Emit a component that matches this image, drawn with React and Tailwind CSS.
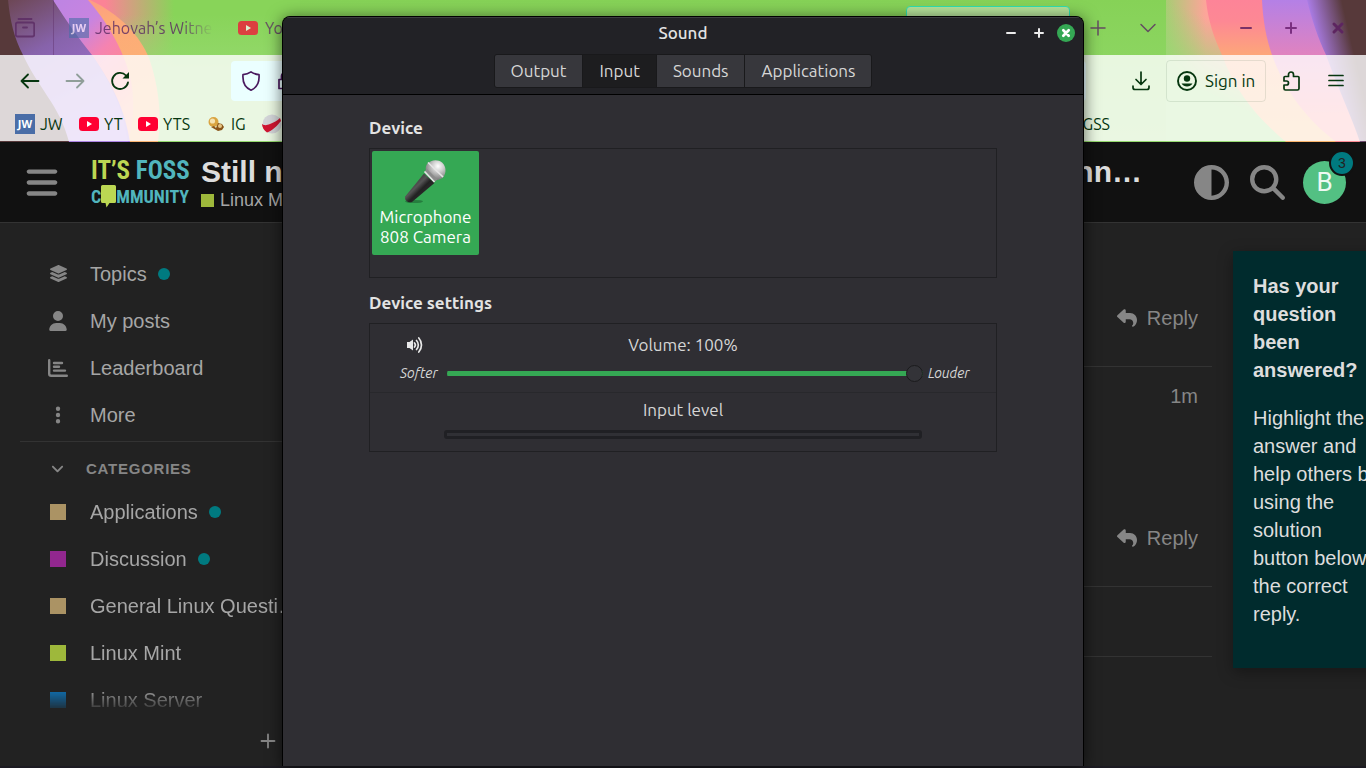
import React, { useState } from 'react';
import {
  FaAngleDown,
  FaBars,
  FaCircleHalfStroke,
  FaEllipsisVertical,
  FaLayerGroup,
  FaMagnifyingGlass,
  FaReply,
  FaUser,
} from 'react-icons/fa6';

const uiFont = "font-['Ubuntu','Noto_Sans',sans-serif]";

const WallpaperLeft = () => (
  <svg width="300" height="142" viewBox="0 0 300 142" aria-hidden="true">
    <defs>
      <linearGradient id="wlGlow" x1="0" x2="1">
        <stop offset="0.35" stopColor="#fb8396" />
        <stop offset="0.58" stopColor="#88d459" />
      </linearGradient>
      <linearGradient id="wlPink" x1="0.2" x2="0.9" y2="0.8">
        <stop offset="0" stopColor="#b884e4" />
        <stop offset="0.4" stopColor="#c884e0" />
        <stop offset="0.6" stopColor="#f583b0" />
        <stop offset="0.8" stopColor="#fd8894" />
        <stop offset="1" stopColor="#fda58c" />
      </linearGradient>
      <linearGradient id="wlPurple" x1="0" x2="0.5" y2="1">
        <stop offset="0" stopColor="#6b454f" />
        <stop offset="0.4" stopColor="#8763ab" />
        <stop offset="1" stopColor="#a97ae0" />
      </linearGradient>
      <linearGradient id="wlOrange" x1="0" x2="0.4" y2="1">
        <stop offset="0" stopColor="#fd8796" />
        <stop offset="0.35" stopColor="#fdaa78" />
        <stop offset="1" stopColor="#fbb573" />
      </linearGradient>
      <linearGradient id="wlFade" x2="0" y2="1">
        <stop offset="0.1" stopColor="#95d96d" stopOpacity="0" />
        <stop offset="0.5" stopColor="#95d96d" />
      </linearGradient>
    </defs>
    <rect width="300" height="142" fill="url(#wlGlow)" />
    <rect x="120" width="180" height="142" fill="url(#wlFade)" />
    <path d="M0 0H90C120 14 140 36 149 58C158 84 162 112 158 142H0Z" fill="url(#wlOrange)" />
    <path d="M0 0H88C104 18 122 46 130 76C135 98 134 122 128 142H0Z" fill="url(#wlPink)" />
    <path d="M0 0H53C66 20 78 38 92 55C108 78 124 104 130 142H0Z" fill="url(#wlPurple)" />
    <path d="M23 55C38 88 60 106 69 142H128C122 104 108 78 92 55Z" fill="#b08ae6" opacity="0.6" />
    <path d="M0 0H8C10 20 14 38 23 55C38 88 60 106 69 142H0Z" fill="#57393a" />
  </svg>
);

const WallpaperRight = () => (
  <svg width="200" height="142" viewBox="20 0 200 142" aria-hidden="true">
    <defs>
      <linearGradient id="wrGlow" x1="0" x2="1">
        <stop offset="0" stopColor="#a9cc74" />
        <stop offset="0.2" stopColor="#fda59a" />
      </linearGradient>
      <linearGradient id="wrGreen" x1="0.6" x2="0.2" y2="1">
        <stop offset="0.2" stopColor="#97da72" stopOpacity="0" />
        <stop offset="0.65" stopColor="#97da72" />
      </linearGradient>
      <linearGradient id="wrOrange" x2="0" y2="1">
        <stop offset="0" stopColor="#fd8498" />
        <stop offset="0.15" stopColor="#fd8894" />
        <stop offset="0.4" stopColor="#fda878" />
        <stop offset="1" stopColor="#fbb56c" />
      </linearGradient>
      <linearGradient id="wrPink" x2="0" y2="1">
        <stop offset="0" stopColor="#b480e6" />
        <stop offset="0.38" stopColor="#df83c0" />
        <stop offset="0.8" stopColor="#fd8a92" />
      </linearGradient>
      <linearGradient id="wrPurple" x1="0.1" y1="0.5" x2="1" y2="0">
        <stop offset="0.15" stopColor="#aa7ce6" />
        <stop offset="0.65" stopColor="#57393a" />
      </linearGradient>
    </defs>
    <rect x="20" width="200" height="142" fill="url(#wrGlow)" />
    <rect x="20" width="120" height="142" fill="url(#wrGreen)" />
    <path d="M60 0C62 20 68 38 76 55C90 94 114 120 140 142H220V0Z" fill="url(#wrOrange)" />
    <path d="M116 0C117 20 120 38 126 55C140 94 162 120 190 142H220V0Z" fill="url(#wrPink)" />
    <path d="M161 0C166 20 172 38 180 55C192 88 206 118 214 142H220V0Z" fill="url(#wrPurple)" />
  </svg>
);

const JwIcon = ({ className = '' }) => (
  <svg width="20" height="20" viewBox="0 0 20 20" className={`shrink-0 ${className}`} aria-hidden="true">
    <rect width="20" height="20" fill="#4a6da7" />
    <text x="10" y="14" textAnchor="middle" fontSize="11" fontWeight="700" fill="#fff" fontFamily="Noto Sans, sans-serif">
      JW
    </text>
  </svg>
);

const YoutubeIcon = ({ className = '' }) => (
  <svg width="20" height="14" viewBox="0 0 20 14" className={`shrink-0 ${className}`} aria-hidden="true">
    <rect width="20" height="14" rx="3.5" fill="#ff0033" />
    <path d="M8 4l5 3-5 3z" fill="#fff" />
  </svg>
);

const BooksIcon = () => (
  <svg width="16" height="14" viewBox="0 0 16 14" className="shrink-0" aria-hidden="true">
    <circle cx="5.5" cy="5" r="5" fill="#d9a441" />
    <circle cx="4.5" cy="4" r="2.6" fill="#f5e2b0" />
    <path d="M3 10l3-1 2 2 2-5 4 1 2 3-2 3-4 1z" fill="#8a5418" />
    <circle cx="12" cy="9" r="2" fill="#e6c685" />
  </svg>
);

const BallIcon = () => (
  <svg width="20" height="20" viewBox="0 0 20 20" className="shrink-0" aria-hidden="true">
    <circle cx="10" cy="10" r="9.5" fill="#d3d5d8" />
    <path d="M0 10C3 12 5 11 8 10C12 8.500 15 7 18 4L19 7C15 12 10 17 5 18.500C2 16.500 0 13 0 10Z" fill="#d01531" />
  </svg>
);

// thin stroked glyphs of the browser chrome
const Stroke = ({ size = 20, width = 1.8, d, className = '' }) => (
  <svg
    width={size}
    height={size}
    viewBox="0 0 20 20"
    fill="none"
    stroke="currentColor"
    strokeWidth={width}
    strokeLinecap="round"
    strokeLinejoin="round"
    className={`shrink-0 ${className}`}
    aria-hidden="true"
  >
    <path d={d} />
  </svg>
);

const IconButton = ({ label, className = '', children }) => (
  <button type="button" aria-label={label} className={`flex shrink-0 items-center justify-center ${className}`}>
    {children}
  </button>
);

const TabStrip = () => (
  <div className="flex h-[55px] items-center text-base text-[#5a2a63]/80">
    <IconButton label="Recent browsing" className="h-full w-[53px] pr-1">
      <Stroke d="M3.500 1h13M2.500 4.500h15a1.700 1.700 0 0 1 1.700 1.700v10.600a1.700 1.700 0 0 1-1.700 1.700h-15a1.700 1.700 0 0 1-1.700-1.700v-10.600a1.700 1.700 0 0 1 1.700-1.700zM8 9.500h4" />
    </IconButton>
    <div className="flex h-full items-center border-l border-[#5a2a63]/40 pl-[15px]">
      <JwIcon className="opacity-60" />
      <span className="ml-[6px] w-[118px] whitespace-nowrap [mask-image:linear-gradient(to_right,black_75%,transparent_100%)]">
        Jehovah’s Witne
      </span>
      <YoutubeIcon className="ml-[25px] opacity-70" />
      <span className="ml-[7px]">YouTube</span>
    </div>
    <div className="ml-auto mt-[6px] h-[49px] w-[164px] self-start rounded-t border border-[#2fe0b0] bg-white/40" />
    <div className="flex items-center">
      <IconButton label="New tab" className="ml-[18px] w-5">
        <Stroke width={1.500} d="M10 3v14M3 10h14" />
      </IconButton>
      <IconButton label="List all tabs" className="ml-[30px] w-5">
        <Stroke width={1.500} d="M3 6.500l7 7 7-7" />
      </IconButton>
      <IconButton label="Minimize browser" className="ml-[78px] w-5 text-[#7a3068]">
        <Stroke width={2} d="M5 10h10" />
      </IconButton>
      <IconButton label="Maximize browser" className="ml-[25px] w-5 text-[#7a2f80]">
        <Stroke width={2} d="M10 5v10M5 10h10" />
      </IconButton>
      <IconButton label="Close browser" className="mr-[18px] ml-[27px] w-5 text-[#5d2560]">
        <Stroke width={3} d="M6 6l8 8M14 6l-8 8" />
      </IconButton>
    </div>
  </div>
);

const Toolbar = () => (
  <div className="flex h-[52px] items-center px-5 text-[#06360f]">
    <IconButton label="Back" className="w-5">
      <Stroke d="M18.500 10H1.500M8 3.500L1.500 10L8 16.500" />
    </IconButton>
    <IconButton label="Forward" className="ml-[25px] w-5 opacity-40">
      <Stroke d="M1.500 10H18.500M12 3.500L18.500 10L12 16.500" />
    </IconButton>
    <IconButton label="Reload" className="ml-[25px] w-5">
      <svg width="20" height="20" viewBox="0 0 20 20" fill="none" stroke="currentColor" strokeWidth="1.8" aria-hidden="true">
        <path d="M18 11.500A8 8 0 1 1 16 4.500" strokeLinecap="round" />
        <path d="M19 1v6.500h-6.500z" fill="currentColor" stroke="none" />
      </svg>
    </IconButton>
    <div className="ml-[101px] flex h-10 flex-1 items-center rounded bg-[#ebffff] px-[10px] text-[#4a1a5e]">
      <Stroke width={1.700} d="M10 .9c2.500 1.700 5.200 2.500 8 2.700.6 7.400-2 13-8 15.600C4 16.600 1.400 11 2 3.600c2.800-.2 5.500-1 8-2.700z" />
      <Stroke className="ml-[14px]" width={1.700} d="M4 8.500h12v9H4zM6.500 8.500V5a3.500 3.500 0 0 1 7 0v3.500" />
    </div>
    <IconButton label="Downloads" className="ml-[45px] w-5">
      <Stroke width={1.700} d="M10 1v12M5 8.500l5 5 5-5M2 15v1.500a2 2 0 0 0 2 2h12a2 2 0 0 0 2-2V15" />
    </IconButton>
    <button type="button" className="ml-[15px] flex h-[42px] w-[100px] items-center gap-2 rounded border border-[#06360f]/10 pl-[10px] text-[17px] whitespace-nowrap">
      <svg width="20" height="20" viewBox="0 0 20 20" className="shrink-0" aria-hidden="true">
        <circle cx="10" cy="10" r="9" fill="none" stroke="currentColor" strokeWidth="1.9" />
        <circle cx="10" cy="7.500" r="3.200" fill="currentColor" />
        <path d="M4.500 12.500h11a6.500 6.500 0 0 1-11 0z" fill="currentColor" />
      </svg>
      Sign in
    </button>
    <IconButton label="Extensions" className="ml-[15px] w-5">
      <Stroke
        width={1.700}
        d="M4 5.500h3.500V3.500a2.500 2.500 0 0 1 5 0v2h4.500a1 1 0 0 1 1 1v11a1.500 1.500 0 0 1-1.500 1.500H4.500A1.500 1.500 0 0 1 3 17.500V14h2.500a2 2 0 0 0 0-4H3V6.500a1 1 0 0 1 1-1z"
      />
    </IconButton>
    <IconButton label="Open menu" className="ml-[25px] w-5">
      <Stroke width={1.700} d="M3 4.500h14M3 9.500h14M3 14.500h14" />
    </IconButton>
  </div>
);

const Bookmarks = () => (
  <nav aria-label="Bookmarks" className="flex h-[34px] items-center pl-[15px] text-base text-[#06360f]">
    <a href="#jw" className="flex w-[64px] shrink-0 items-center gap-[5px]">
      <JwIcon />
      JW
    </a>
    <a href="#yt" className="flex w-[59px] shrink-0 items-center gap-[5px]">
      <YoutubeIcon />
      YT
    </a>
    <a href="#yts" className="flex w-[70px] shrink-0 items-center gap-[5px]">
      <YoutubeIcon />
      YTS
    </a>
    <a href="#ig" className="flex w-[54px] shrink-0 items-center gap-[7px]">
      <BooksIcon />
      IG
    </a>
    <a href="#ball" aria-label="Bookmark">
      <BallIcon />
    </a>
    <a href="#gss" className="mr-[256px] ml-auto">
      GSS
    </a>
  </nav>
);

const Browser = () => (
  <header className={`relative h-[142px] shrink-0 bg-gradient-to-b from-[#86d257] to-[#95d96d] ${uiFont}`}>
    <div className="absolute inset-0 flex justify-between overflow-hidden">
      <WallpaperLeft />
      <WallpaperRight />
    </div>
    <div className="relative">
      <TabStrip />
      <div className="bg-white/80">
        <Toolbar />
        <Bookmarks />
      </div>
    </div>
  </header>
);

const Logo = () => (
  <a
    href="#home"
    aria-label="It's FOSS Community"
    className="flex h-[54px] w-[99px] shrink-0 flex-col justify-center font-['Ubuntu_Condensed','Roboto_Condensed','Liberation_Sans_Narrow',sans-serif] font-bold whitespace-nowrap text-[#51b5bd]"
  >
    <span className="text-[25px] leading-7">
      <span className="text-[#bcd753]">IT’S</span> FOSS
    </span>
    <span className="flex items-center text-lg leading-[23px]">
      C
      <svg width="15" height="23" viewBox="0 0 15 23" aria-hidden="true">
        <path d="M1.500 0h12A1.500 1.500 0 0 1 15 1.500v15a1.500 1.500 0 0 1-1.500 1.500H8.500L5.500 22.500L4.500 18h-3A1.500 1.500 0 0 1 0 16.500v-15A1.500 1.500 0 0 1 1.500 0z" fill="#bcd753" />
      </svg>
      MMUNITY
    </span>
  </a>
);

const SiteHeader = () => (
  <div className="flex h-[81px] shrink-0 items-center border-b border-[#333] bg-[#111] pr-5 pl-[26px] text-[#868686]">
    <IconButton label="Sidebar" className="w-8">
      <FaBars size={35} />
    </IconButton>
    <div className="ml-[33px]">
      <Logo />
    </div>
    <div className="ml-[11px] min-w-0 flex-1 pt-1">
      <h1 className="flex justify-between text-[30px] leading-8 font-bold text-[#ddd]">
        <span>Still n</span>
        <span>nn…</span>
      </h1>
      <a href="#mint" className="flex items-center gap-[6px] text-lg leading-6 text-[#a6a6a6]">
        <span className="size-[13px] bg-[#9eb83b]" />
        Linux Mint
      </a>
    </div>
    <IconButton label="Toggle color scheme" className="ml-[52px]">
      <FaCircleHalfStroke size={35} />
    </IconButton>
    <IconButton label="Search" className="ml-[21px]">
      <FaMagnifyingGlass size={35} />
    </IconButton>
    <button type="button" aria-label="Notifications" className="relative ml-[18px] size-[43px] rounded-full bg-[#53c083] font-['Roboto',sans-serif] text-[26px] leading-[43px] text-white/90">
      B
      <span className="absolute -top-[11px] -right-[9px] size-[26px] rounded-full border-2 border-[#111] bg-[#007a80] font-['Liberation_Sans',sans-serif] text-sm leading-[22px] text-[#222]">
        3
      </span>
    </button>
  </div>
);

const LeaderboardIcon = () => (
  <svg width="20" height="18" viewBox="0 0 20 18" fill="none" stroke="currentColor" strokeWidth="2.400" strokeLinecap="round" aria-hidden="true">
    <path d="M1.200 1.200v13.600a2 2 0 0 0 2 2h15.600M6 4h8M6 7.800h5M6 11.600h11" />
  </svg>
);

const sections = [
  { label: 'Topics', icon: <FaLayerGroup size={19} />, unread: true },
  { label: 'My posts', icon: <FaUser size={20} /> },
  { label: 'Leaderboard', icon: <LeaderboardIcon /> },
  { label: 'More', icon: <FaEllipsisVertical size={20} /> },
];

const categories = [
  { label: 'Applications', color: 'bg-[#ab9364]', unread: true },
  { label: 'Discussion', color: 'bg-[#92278f]', unread: true },
  { label: 'General Linux Questi…', color: 'bg-[#ab9364]' },
  { label: 'Linux Mint', color: 'bg-[#9eb83b]' },
  { label: 'Linux Server', color: 'bg-[#0e76bd]' },
];

const SidebarRow = ({ label, unread, children }) => (
  <li>
    <a href="#section" className="flex h-[47px] items-center whitespace-nowrap">
      <span className="flex w-[36px] justify-center text-[#868686]">{children}</span>
      <span className="ml-[14px]">{label}</span>
      {unread && <span className="ml-[11px] size-3 rounded-full bg-[#007a80]" />}
    </a>
  </li>
);

const Sidebar = () => (
  <nav aria-label="Sidebar" className="w-[320px] shrink-0 pt-[27px] pl-5 text-[#a6a6a6]">
    <ul className="border-b border-[#333] pb-[3px] pl-5">
      {sections.map((s) => (
        <SidebarRow key={s.label} label={s.label} unread={s.unread}>
          {s.icon}
        </SidebarRow>
      ))}
    </ul>
    <button type="button" className="flex h-[46px] w-full items-center pt-[6px] pl-[30px] text-[15px] font-bold tracking-wider text-[#868686]">
      <FaAngleDown size={15} />
      <span className="ml-[21px]">CATEGORIES</span>
    </button>
    <ul className="pl-5 [mask-image:linear-gradient(to_bottom,black_85%,transparent_96%)]">
      {categories.map((c) => (
        <SidebarRow key={c.label} label={c.label} unread={c.unread}>
          <span className={`size-4 ${c.color}`} />
        </SidebarRow>
      ))}
    </ul>
    <div className="flex justify-end pt-2 pr-[42px] text-[#868686]">
      <IconButton label="Add section">
        <Stroke width={1.800} d="M10 3.500v13M3.500 10h13" />
      </IconButton>
    </div>
  </nav>
);

const ReplyButton = () => (
  <button type="button" className="flex h-7 items-center gap-[10px] text-[#868686]">
    <FaReply size={20} />
    Reply
  </button>
);

const Topic = () => (
  <main className="flex flex-1 flex-col text-[#868686]">
    <div className="flex h-[144px] justify-end border-b border-[#333] pt-[81px] pr-[14px]">
      <ReplyButton />
    </div>
    <div className="flex h-[220px] flex-col items-end justify-between border-b border-[#333] pt-[15px] pr-[14px] pb-[34px]">
      <span>1m</span>
      <ReplyButton />
    </div>
    <div className="h-[70px] border-b border-[#333]" />
  </main>
);

const AnsweredHint = () => (
  <aside className="mt-[28px] -mr-[35px] ml-[21px] w-[168px] shrink-0 self-start bg-[#002b2d] px-5 pt-[21px] pb-10 leading-7 text-[#ddd] shadow-[0_4px_14px_rgba(0,0,0,0.35)]">
    <h2 className="mb-5 font-bold">Has your question been answered?</h2>
    <p>Highlight the answer and help others by using the solution button below the correct reply.</p>
  </aside>
);

const MicrophoneIcon = () => (
  <svg width="48" height="48" viewBox="0 0 48 48" className="shrink-0" aria-hidden="true">
    <defs>
      <radialGradient id="micBall" cx="0.62" cy="0.3" r="0.7">
        <stop offset="0" stopColor="#fff" />
        <stop offset="0.4" stopColor="#cfcfcf" />
        <stop offset="1" stopColor="#777" />
      </radialGradient>
      <linearGradient id="micBody" x1="0.2" y1="0.3" x2="0.7" y2="0.8">
        <stop offset="0" stopColor="#3a3a3a" />
        <stop offset="0.35" stopColor="#555" />
        <stop offset="0.6" stopColor="#222" />
        <stop offset="1" stopColor="#2e2e2e" />
      </linearGradient>
    </defs>
    <ellipse cx="12" cy="44.500" rx="9" ry="1.600" fill="#1f6b34" opacity="0.7" />
    <path d="M3.200 39.500L22 16.500L32.500 26L10 45C6 46.500 2 43 3.200 39.500z" fill="url(#micBody)" />
    <path d="M25 7C29 2.500 36 2 40 5.500C44.500 9.500 44.500 16 41 20.500C38 23 34 24 31 22L25 16C23 13 23.500 9.500 25 7z" fill="url(#micBall)" />
    <path d="M22.500 14.500L32.500 25L35.500 22.500L25 12z" fill="#8b8b8b" />
    <path d="M22.500 14.500L32.500 25M26 5.500L41 20" stroke="#e4e4e4" strokeWidth="1.700" />
  </svg>
);

const SpeakerIcon = () => (
  <svg width="18" height="18" viewBox="0 0 18 18" fill="none" stroke="currentColor" strokeLinecap="round" aria-hidden="true">
    <path d="M1 6h2.500L7 3.500v11L3.500 12H1z" fill="currentColor" stroke="none" />
    <path d="M8.500 7a3 3 0 0 1 0 4M10.500 4.500a6.500 6.500 0 0 1 0 9M12.800 2a10.500 10.500 0 0 1 0 14" strokeWidth="1.700" />
  </svg>
);

const tabs = ['Output', 'Input', 'Sounds', 'Applications'];

const SoundDialog = () => {
  const [tab, setTab] = useState('Input');
  const [volume, setVolume] = useState(100);

  return (
    <section
      role="dialog"
      aria-label="Sound"
      className={`absolute top-4 bottom-[2px] left-1/2 flex w-[802px] -translate-x-1/2 flex-col overflow-hidden rounded-t-lg border border-b-0 border-black bg-[#2f2e33] text-[17px] text-[#d6d6d6] shadow-[0_2px_16px_rgba(0,0,0,0.6)] ${uiFont}`}
    >
      <div className="border-b border-black bg-[#222226] shadow-[inset_0_1px_0_#3c3c40]">
        <div className="grid h-[37px] grid-cols-[1fr_auto_1fr] items-center pb-[5px]">
          <h2 className="col-start-2 font-medium text-[#e3e3e3]">Sound</h2>
          <div className="flex items-center justify-end gap-2 pr-2 text-[#ececec]">
            <IconButton label="Minimize" className="size-5">
              <Stroke width={2} d="M6 10h8" />
            </IconButton>
            <IconButton label="Maximize" className="size-5">
              <Stroke width={2} d="M10 6v8M6 10h8" />
            </IconButton>
            <IconButton label="Close" className="size-[18px] rounded-full bg-[#35a854] text-white">
              <Stroke size={18} width={3} d="M7 7l6 6M13 7l-6 6" />
            </IconButton>
          </div>
        </div>
        <div role="tablist" className="mb-[6px] flex justify-center">
          <div className="flex h-[34px] overflow-hidden rounded-[3px] border border-[#19191b]">
            {tabs.map((name) => (
              <button
                key={name}
                type="button"
                role="tab"
                aria-selected={tab === name}
                onClick={() => setTab(name)}
                className={`border-r border-[#19191b] px-4 last:border-r-0 ${tab === name ? 'bg-[#1d1d1f]' : 'bg-[#37373c]'}`}
              >
                {name}
              </button>
            ))}
          </div>
        </div>
      </div>

      <div className="px-[86px] pt-[21px]">
        <h3 className="leading-6 font-semibold text-[#e3e3e3]">Device</h3>
        <div className="mt-2 h-[130px] border border-[#202023] p-[2px]">
          <button type="button" className="flex h-[104px] w-[107px] flex-col items-center rounded-[2px] bg-[#35a854] pt-[6px] leading-5 text-white">
            <MicrophoneIcon />
            <span className="mt-[2px]">Microphone</span>
            <span>808 Camera</span>
          </button>
        </div>

        <h3 className="mt-[13px] leading-6 font-semibold text-[#e3e3e3]">Device settings</h3>
        <div className="mt-2 border border-[#202023]">
          <div className="h-[69px] border-b border-[#28282c] pt-[9px]">
            <div className="grid grid-cols-[1fr_auto_1fr] items-center pl-9">
              <IconButton label="Mute input" className="size-[18px] text-[#e8e8e8]">
                <SpeakerIcon />
              </IconButton>
              <label htmlFor="volume" className="-ml-9 leading-6">
                Volume: {volume}%
              </label>
            </div>
            <div className="mt-[6px] flex items-center justify-between pr-[26px] pl-[30px] text-sm leading-5 italic">
              <span className="w-[47px]">Softer</span>
              <input
                id="volume"
                type="range"
                min="0"
                max="100"
                value={volume}
                onChange={(e) => setVolume(Number(e.target.value))}
                style={{ backgroundSize: `${volume}% 5px` }}
                className="h-[17px] min-w-0 flex-1 appearance-none rounded-full bg-[linear-gradient(#35a854,#35a854)] bg-left bg-no-repeat [&::-webkit-slider-thumb]:size-[17px] [&::-webkit-slider-thumb]:appearance-none [&::-webkit-slider-thumb]:rounded-full [&::-webkit-slider-thumb]:border [&::-webkit-slider-thumb]:border-[#1b1b1d] [&::-webkit-slider-thumb]:bg-[#333338]"
              />
              <span className="w-[47px] pl-[5px]">Louder</span>
            </div>
          </div>
          <div className="flex h-[58px] flex-col items-center pt-[5px]">
            <span id="level" className="leading-6">
              Input level
            </span>
            <div
              role="meter"
              aria-labelledby="level"
              aria-valuenow={0}
              className="mt-2 h-[9px] w-[478px] rounded-[3px] border-3 border-[#202024] bg-[#303035]"
            />
          </div>
        </div>
      </div>
    </section>
  );
};

const App = () => (
  <div className="relative flex h-screen flex-col overflow-hidden bg-[#222] font-['Liberation_Sans',sans-serif] text-xl">
    <Browser />
    <SiteHeader />
    <div className="flex min-h-0 flex-1 overflow-hidden border-b-2 border-[#1c1b22]">
      <Sidebar />
      <Topic />
      <AnsweredHint />
    </div>
    <SoundDialog />
  </div>
);

export default App;
